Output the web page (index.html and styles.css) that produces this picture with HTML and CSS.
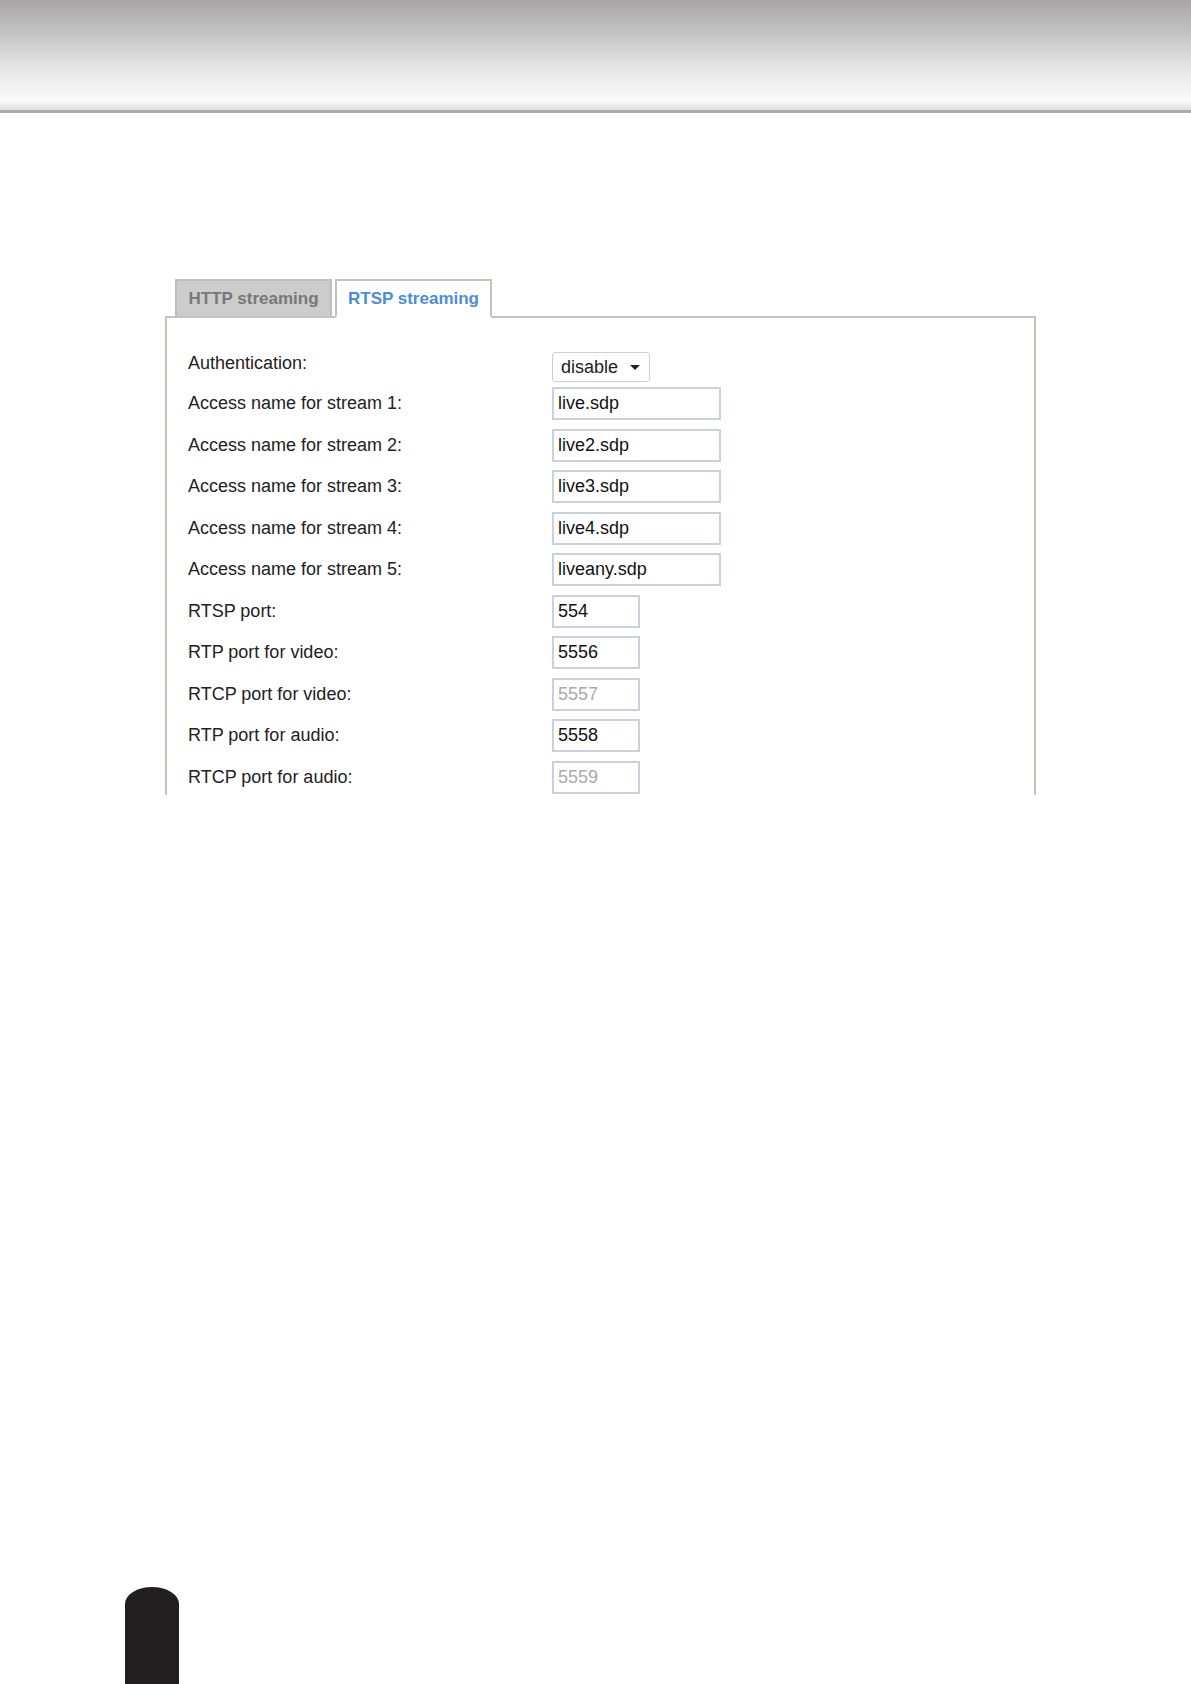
FILE: index.html
```html
<!DOCTYPE html>
<html lang="en">
  <head>
    <meta charset="UTF-8" />
    <meta name="viewport" content="width=device-width, initial-scale=1.0" />
    <title>RTSP streaming</title>
    <link rel="stylesheet" href="styles.css">
  </head>
  <body>
    <header class="page-top"></header>

    <main class="streaming">
      <nav class="tabs">
        <span class="tab">HTTP streaming</span>
        <span class="tab active">RTSP streaming</span>
      </nav>

      <section class="panel">
        <div class="row row-first">
          <label class="row-label">Authentication:</label>
          <div class="select">
            <span>disable</span>
            <span class="caret"></span>
          </div>
        </div>
        <div class="row">
          <label class="row-label">Access name for stream 1:</label>
          <input type="text" class="field wide" value="live.sdp" />
        </div>
        <div class="row">
          <label class="row-label">Access name for stream 2:</label>
          <input type="text" class="field wide" value="live2.sdp" />
        </div>
        <div class="row">
          <label class="row-label">Access name for stream 3:</label>
          <input type="text" class="field wide" value="live3.sdp" />
        </div>
        <div class="row">
          <label class="row-label">Access name for stream 4:</label>
          <input type="text" class="field wide" value="live4.sdp" />
        </div>
        <div class="row">
          <label class="row-label">Access name for stream 5:</label>
          <input type="text" class="field wide" value="liveany.sdp" />
        </div>
        <div class="row">
          <label class="row-label">RTSP port:</label>
          <input type="text" class="field short" value="554" />
        </div>
        <div class="row">
          <label class="row-label">RTP port for video:</label>
          <input type="text" class="field short" value="5556" />
        </div>
        <div class="row">
          <label class="row-label">RTCP port for video:</label>
          <input type="text" class="field short" value="5557" disabled />
        </div>
        <div class="row">
          <label class="row-label">RTP port for audio:</label>
          <input type="text" class="field short" value="5558" />
        </div>
        <div class="row">
          <label class="row-label">RTCP port for audio:</label>
          <input type="text" class="field short" value="5559" disabled />
        </div>
      </section>
    </main>

    <div class="thumb-tab"></div>
  </body>
</html>
```

FILE: styles.css
```css
html {
  box-sizing: border-box;
  font-family: 'Liberation Sans', Arial, sans-serif;
}
*,
*::after,
*::before {
  box-sizing: inherit;
}

body {
  margin: 0;
  min-height: 100vh;
  background-color: #fff;
  color: #222;
  display: flex;
  flex-direction: column;
}

.page-top {
  height: 113px;
  background: linear-gradient(
    to bottom,
    #a8a6a6 0%,
    #c3c3c3 30%,
    #e6e6e6 62%,
    #fafafa 92%,
    #dedede 100%
  );
  border-bottom: 3px solid #acacac;
}

.streaming {
  margin: 166px 0 0 165px;
  width: 871px;
}

.tabs {
  display: flex;
  gap: 3px;
  margin-left: 10px;
  margin-bottom: -2px;
}

.tab {
  position: relative;
  z-index: 1;
  width: 157px;
  height: 39px;
  padding-top: 8px;
  text-align: center;
  font-size: 17px;
  font-weight: bold;
  color: #787878;
  background-color: #cccccc;
  border: 2px solid #bdbdbd;
  border-bottom: 2px solid #c6c3bd;
}

.tab.active {
  color: #4a8ed8;
  background-color: #fff;
  border-color: #c6c3bd;
  border-bottom-color: #fff;
}

.panel {
  height: 479px;
  padding: 34px 0 0 21px;
  border: 2px solid #c6c3bd;
  border-bottom: none;
}

.row {
  display: flex;
  align-items: center;
  margin-bottom: 8.5px;
}

.row-first {
  margin-bottom: 5px;
}

.row-label {
  width: 364px;
  font-size: 18px;
  color: #222;
}

.row-first .row-label {
  padding-bottom: 7px;
}

.select {
  display: flex;
  align-items: center;
  justify-content: space-between;
  width: 98px;
  height: 30px;
  padding: 0 9px 0 8px;
  font-size: 18px;
  color: #222;
  background-color: #fff;
  border: 1px solid #cfcfcf;
  border-radius: 3px;
}

.caret {
  width: 0;
  height: 0;
  border-left: 5px solid transparent;
  border-right: 5px solid transparent;
  border-top: 5px solid #222;
}

.field {
  height: 33px;
  margin: 0;
  padding: 0 4px;
  font-family: 'Liberation Sans', Arial, sans-serif;
  font-size: 18px;
  color: #111;
  background-color: #fff;
  border: 2px solid #c9d0de;
  border-radius: 0;
  outline: none;
}

.field.wide {
  width: 169px;
}

.field.short {
  width: 88px;
}

.field:disabled {
  color: #aaa;
  background-color: #fff;
}

.thumb-tab {
  margin: auto 0 0 125px;
  width: 54px;
  height: 97px;
  background-color: #231f20;
  border-radius: 27px 27px 0 0 / 17px 17px 0 0;
}
```
